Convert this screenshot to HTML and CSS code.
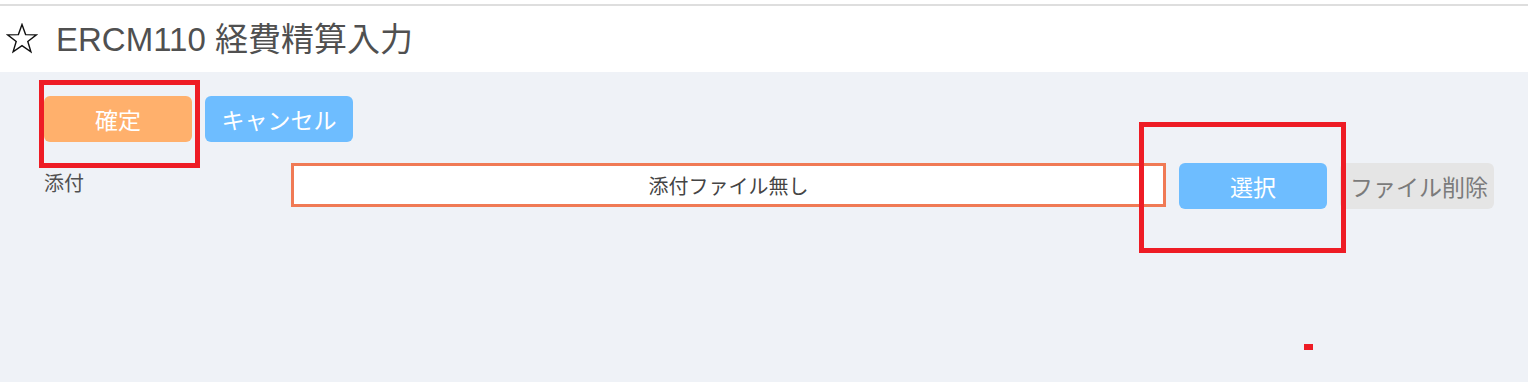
FILE: index.html
```html
<!DOCTYPE html>
<html lang="ja">

<head>
  <meta charset="UTF-8">
  <meta name="viewport" content="width=device-width, initial-scale=1.0">
  <title>ERCM110 経費精算入力</title>
  <link rel="stylesheet" href="styles.css">
</head>

<body>
  <header class="header">
    <svg class="star" width="32" height="31" viewBox="0 0 32 31">
      <polygon points="16,1.5 19.6,11.6 30.4,11.8 21.8,18.4 24.9,28.8 16,22.6 7.1,28.8 10.2,18.4 1.6,11.8 12.4,11.6"
        fill="none" stroke="#111" stroke-width="1.4" stroke-linejoin="miter" />
    </svg>
    <h1 class="title">ERCM110 経費精算入力</h1>
  </header>

  <main class="content">
    <div class="actions">
      <button class="btn btn-orange">確定</button>
      <button class="btn btn-blue">キャンセル</button>
    </div>

    <div class="file-row">
      <div class="label">添付</div>
      <div class="file-box">添付ファイル無し</div>
      <button class="btn btn-blue">選択</button>
      <button class="btn btn-gray">ファイル削除</button>
    </div>

    <!-- annotation marks -->
    <div class="mark mark-confirm"></div>
    <div class="mark mark-select"></div>
    <div class="mark-dot"></div>
  </main>
</body>

</html>
```

FILE: styles.css
```css
* {
  padding: 0;
  margin: 0;
  box-sizing: border-box;
}

body {
  font-family: "Noto Sans CJK JP", "Liberation Sans", sans-serif;
  background-color: #fff;
  height: 382px;
  overflow: hidden;
  position: relative;
}

.header {
  margin-top: 4px;
  border-top: 2px solid #dedede;
  height: 68px;
  display: flex;
  align-items: center;
  padding-left: 6px;
  background-color: #fff;
}

.star {
  display: block;
  margin-top: -2px;
}

.title {
  margin-left: 18px;
  font-family: "Liberation Sans", "Noto Sans CJK JP", sans-serif;
  font-size: 33px;
  font-weight: normal;
  color: #505050;
  margin-top: -4px;
}

.content {
  background-color: #eff2f7;
  height: 310px;
  padding: 24px 0 0 44px;
}

.actions {
  display: flex;
  gap: 13px;
}

.btn {
  height: 46px;
  width: 148px;
  border: none;
  border-radius: 6px;
  font-family: "Noto Sans CJK JP", sans-serif;
  font-size: 23px;
  color: #fff;
}

.btn-orange {
  background-color: #ffb06c;
}

.btn-blue {
  background-color: #6ebdff;
}

.btn-gray {
  background-color: #e5e5e5;
  color: #7b7b7b;
  width: 154px;
  padding-left: 0;
  text-align: left;
  text-indent: 10px;
  white-space: nowrap;
}

.file-row {
  display: flex;
  align-items: flex-start;
  gap: 13px;
  margin-top: 21px;
}

.label {
  width: 234px;
  font-size: 20px;
  color: #505050;
  padding-top: 5px;
}

.file-box {
  width: 875px;
  height: 44px;
  border: 3px solid #f07a55;
  background-color: #fff;
  display: flex;
  align-items: center;
  justify-content: center;
  font-size: 20px;
  color: #444;
}

.mark {
  position: absolute;
  border: 5px solid #ee1c25;
}

.mark-confirm {
  left: 39px;
  top: 80px;
  width: 161px;
  height: 88px;
}

.mark-select {
  left: 1139px;
  top: 122px;
  width: 207px;
  height: 131px;
}

.mark-dot {
  position: absolute;
  left: 1304px;
  top: 344px;
  width: 9px;
  height: 6px;
  background-color: #ee1c25;
}
```
